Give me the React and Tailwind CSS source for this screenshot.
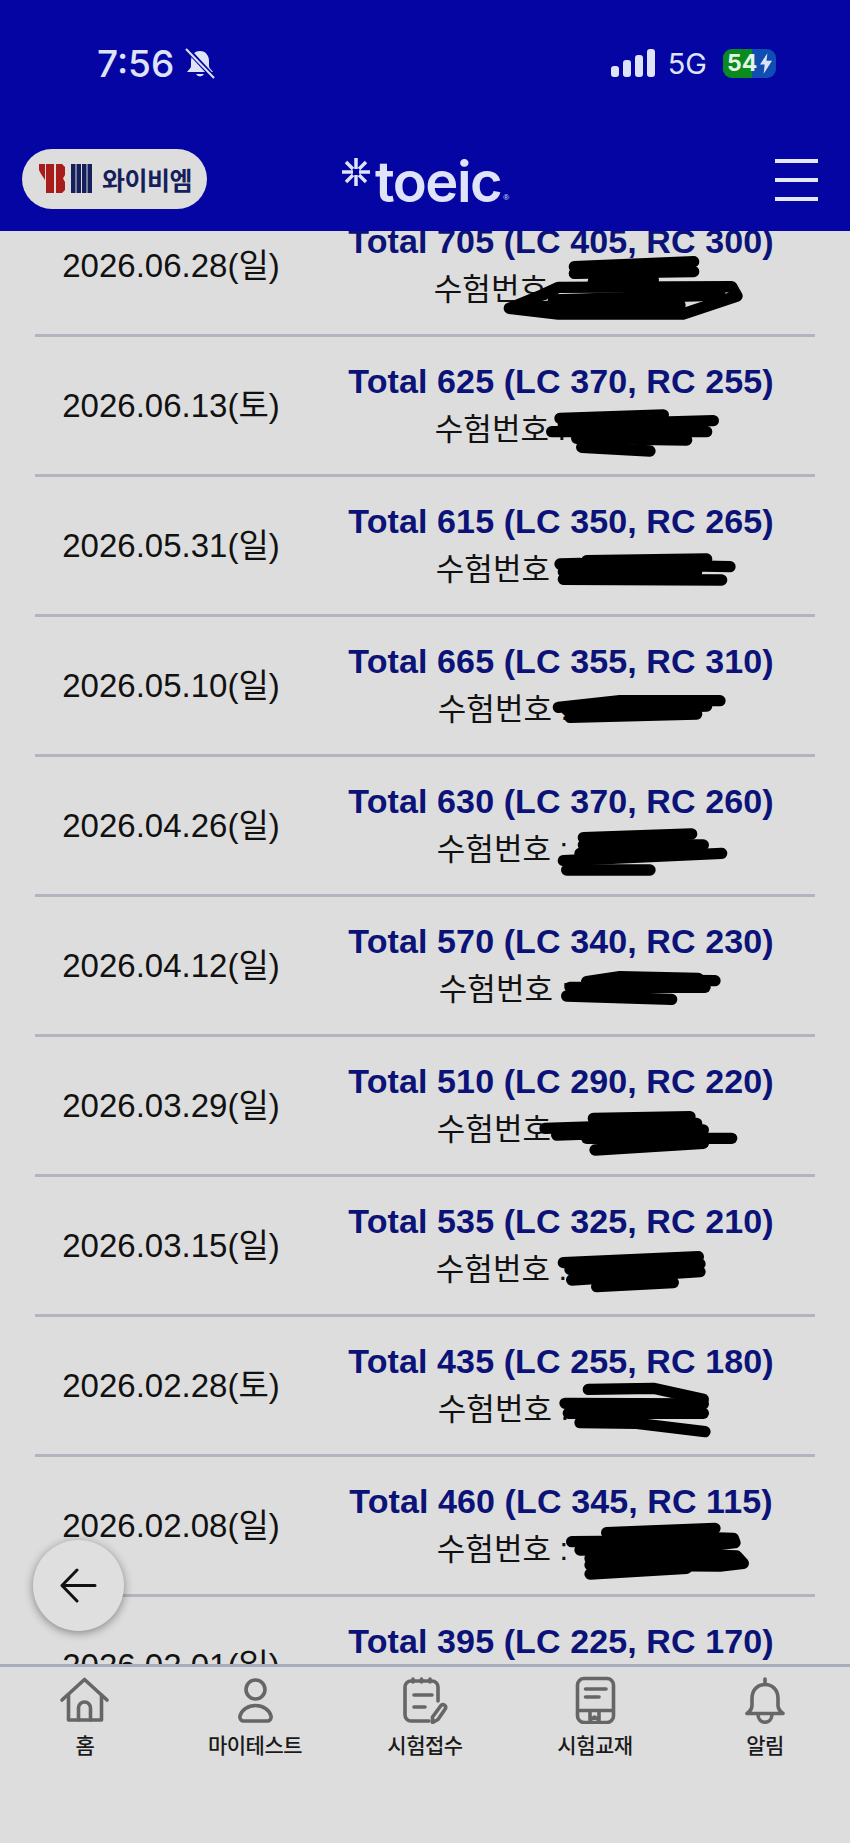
import React from "react";

const rows = [
  { date: "2026.06.28(일)", total: 705, lc: 405, rc: 300, gap: "w-[123px]", marks: ["M463 170 L821 155", "M463 190 L821 185", "M415 232 L935 230 L951 258 L789 312 L415 312 L268 295 L366 255 Z", "M400 270 L900 255", "M330 290 L780 285", "M520 215 L700 210"] },
  { date: "2026.06.13(토)", total: 625, lc: 370, rc: 255, gap: "w-[121px]", marks: ["M420 205 L730 195", "M430 225 L880 212", "M395 245 L860 245", "M470 265 L800 270", "M485 292 L690 303"] },
  { date: "2026.05.31(일)", total: 615, lc: 350, rc: 265, gap: "w-[119px]", marks: ["M420 222 L480 220", "M500 212 L860 207", "M520 222 L930 230", "M430 245 L830 245", "M430 268 L905 270"] },
  { date: "2026.05.10(일)", total: 665, lc: 355, rc: 310, gap: "w-[115px]", marks: ["M415 232 L600 212 L900 212", "M440 240 L860 228", "M450 262 L830 252"] },
  { date: "2026.04.26(일)", total: 630, lc: 370, rc: 260, gap: "w-[117px]", marks: ["M490 203 L815 192", "M490 225 L850 225", "M430 272 L905 250", "M480 250 L800 245", "M440 300 L690 300"] },
  { date: "2026.04.12(일)", total: 570, lc: 340, rc: 230, gap: "w-[113px]", marks: ["M500 215 L600 200 L835 205", "M640 210 L885 212", "M450 232 L855 232", "M440 258 L755 268"] },
  { date: "2026.03.29(일)", total: 510, lc: 290, rc: 220, gap: "w-[117px]", marks: ["M375 235 L830 220", "M520 205 L810 200", "M410 255 L850 240", "M500 265 L935 265", "M525 300 L850 280"] },
  { date: "2026.03.15(일)", total: 535, lc: 325, rc: 210, gap: "w-[119px]", marks: ["M430 218 L835 200", "M450 238 L840 222", "M455 270 L840 245", "M530 290 L760 278"] },
  { date: "2026.02.28(토)", total: 435, lc: 255, rc: 180, gap: "w-[115px]", marks: ["M505 178 L700 175 L850 208", "M435 220 L850 222", "M445 250 L850 250", "M480 278 L650 280 L855 305"] },
  { date: "2026.02.08(일)", total: 460, lc: 345, rc: 115, gap: "w-[117px]", marks: ["M560 188 L885 175", "M600 195 L940 205 L945 218 L800 235", "M455 215 L800 212", "M480 240 L800 235", "M800 252 L950 258 L970 280 L900 288 L510 285", "M510 312 L800 295", "M510 265 L800 260"] },
  { date: "2026.02.01(일)", total: 395, lc: 225, rc: 170, gap: "w-[117px]", marks: [] },
];

const iconProps = { width: 60, height: 48, viewBox: "0 0 60 48", fill: "none", stroke: "#666666", strokeWidth: 3.6, strokeLinecap: "round", strokeLinejoin: "round" };

const HomeIcon = () => (
  <svg {...iconProps}>
    <path d="M7 24 L29.5 3.5 L52 24" />
    <path d="M13.5 19 V44 H46.5 V19" />
    <path d="M23.5 44 V32 a6 6 0 0 1 12 0 V44" />
  </svg>
);

const UserIcon = () => (
  <svg {...iconProps}>
    <circle cx="30.5" cy="13.5" r="9.5" />
    <path d="M19 45 H42 a4 4 0 0 0 4-5 c-1.5-6-8-10.500-15.500-10.500 s-14 4.500-15.500 10.500 a4 4 0 0 0 4 5z" />
  </svg>
);

const NoteIcon = () => (
  <svg {...iconProps}>
    <path d="M34 45 H16 a6 6 0 0 1-6-6 V11 a6 6 0 0 1 6-6 H37 a6 6 0 0 1 6 6 V25" />
    <path d="M18 3 V6 M26.500 3 V6 M35 3 V6" />
    <path d="M19 19 H37 M19 31 H30" />
    <path d="M46 29.500 c2.500-2 5.500 0 4.500 3 L43 43.500 L37.500 46.500 L37.500 41z" />
  </svg>
);

const BookIcon = () => (
  <svg {...iconProps}>
    <rect x="12.500" y="2.500" width="36" height="44" rx="6.500" />
    <path d="M20.500 13 H41 M20.500 21 H34" />
    <path d="M13 34.500 H48" />
    <path d="M25 35 V44 L29.500 41 L34 44 V35" />
  </svg>
);

const BellIcon = () => (
  <svg {...iconProps}>
    <path d="M30 8.500 c-8 0-13 6-13 14 v7 c0 4-2 5.500-5 8 H48 c-3-2.500-5-4-5-8 v-7 c0-8-5-14-13-14z" />
    <path d="M30 3 V8" />
    <path d="M23 38 c0 11 14 11 14 0" />
  </svg>
);

const navItems = [
  { label: "홈", Icon: HomeIcon },
  { label: "마이테스트", Icon: UserIcon },
  { label: "시험접수", Icon: NoteIcon },
  { label: "시험교재", Icon: BookIcon },
  { label: "알림", Icon: BellIcon },
];

const StatusBar = () => (
  <div className="mt-[46px] h-[34px] flex items-center justify-between pl-[97px] pr-[74px] text-[#dfe3f7]">
    <div className="flex items-center gap-[11px]">
      <span className="font-['Inter',sans-serif] font-medium text-[37px] leading-none">7:56</span>
      <svg width="30" height="31" viewBox="0 0 30 31">
        <path d="M15 3 c-6 0-9 5-9 10 v5 c0 2-2 3.500-4 6 h26 c-2-2.500-4-4-4-6 v-5 c0-5-3-10-9-10z" fill="#dfe3f7" />
        <path d="M11 26 a4.500 4.500 0 0 0 8 0z" fill="#dfe3f7" />
        <path d="M1 0 L29 30" stroke="#0505a3" strokeWidth="5" />
        <path d="M1 1 L29 30" stroke="#dfe3f7" strokeWidth="2" />
      </svg>
    </div>
    <div className="flex items-center">
      <div className="flex items-end gap-[4px] h-[28px]">
        <span className="w-[8px] h-[11px] rounded-[3px] bg-[#dfe3f7]" />
        <span className="w-[8px] h-[17px] rounded-[3px] bg-[#dfe3f7]" />
        <span className="w-[8px] h-[22px] rounded-[3px] bg-[#dfe3f7]" />
        <span className="w-[8px] h-[28px] rounded-[3px] bg-[#dfe3f7]" />
      </div>
      <span className="ml-[13px] font-['Inter',sans-serif] text-[29px] leading-none">5G</span>
      <div className="ml-[16px] relative w-[53px] h-[29px] rounded-[9px] bg-[#0f4fb4] overflow-hidden flex items-center">
        <span className="absolute left-0 top-0 bottom-0 w-[29px] bg-[#0a8a1f]" />
        <span className="relative ml-[4px] font-['Inter',sans-serif] font-bold text-[23px] leading-none text-[#e3f5e3]">54</span>
        <svg className="relative ml-[3px]" width="12" height="21" viewBox="0 0 13 22">
          <path d="M8 0 L0 12 H5 L4 22 L13 8 H7z" fill="#dfe3f7" />
        </svg>
      </div>
    </div>
  </div>
);

const Logo = () => (
  <div className="w-[185px] h-[60px] rounded-full bg-[#dddddd] flex items-center pl-[17px] shrink-0">
    <svg width="54" height="30" viewBox="0 0 54 30">
      <g fill="#a81c1c">
        <polygon points="0,0 6,0 6,16 2,10 0,6" />
        <polygon points="7,0 15,0 15,29 7,29" />
        <polygon points="17,0 23,0 26,3 26,11 24,14.500 26,18 26,26 23,29 17,29" />
      </g>
      <g fill="#141f5c">
        <rect x="32" y="0" width="4.500" height="29" />
        <rect x="37.500" y="0" width="4.500" height="29" />
        <rect x="43" y="0" width="4.500" height="29" />
        <rect x="48.500" y="0" width="4.500" height="29" />
      </g>
    </svg>
    <span className="ml-[9px] font-['Noto_Sans_CJK_KR',sans-serif] font-bold text-[25px] leading-none tracking-[-0.5px] text-[#141f5c]">와이비엠</span>
  </div>
);

const ToeicLogo = () => (
  <div className="ml-[134px] mt-[8px] flex items-start text-[#dfe3f7]">
    <svg width="30" height="30" viewBox="0 0 30 30" stroke="#dfe3f7" strokeWidth="3.500">
      <path d="M15 1 V12 M15 18 V29 M1 15 H12 M18 15 H29 M5 5 L12 12 M18 18 L25 25 M25 5 L18 12 M12 18 L5 25" />
    </svg>
    <span className="ml-[4px] mt-[-3px] font-['Inter',sans-serif] font-semibold text-[56px] leading-[56px] tracking-[-1.500px]">toeic</span>
    <span className="ml-[2px] mt-[37px] text-[8px] leading-none">®</span>
  </div>
);

const ScoreRow = ({ row }) => (
  <div className="relative h-[140px] flex items-center border-b-[3px] border-[#b2b5bd]">
    <div className="w-[272px] text-center text-[33px] text-[#111111]">{row.date}</div>
    <div className="flex-1 flex flex-col items-center">
      <div className="font-bold text-[34px] leading-[47px] tracking-[0.1px] text-[#0b1378] whitespace-nowrap">
        Total {row.total} (LC {row.lc}, RC {row.rc})
      </div>
      <div className="flex items-center text-[31px] leading-[47px] text-[#111111] pt-[1px]">
        <span>수험번호 :</span>
        <span className={`inline-block ${row.gap}`} />
      </div>
    </div>
    {row.marks.length > 0 && (
      <svg className="absolute left-[385px] top-[13px] overflow-visible" width="360" height="140" viewBox="0 0 1080 420" fill="none" stroke="#000000" strokeWidth="34" strokeLinecap="round" strokeLinejoin="round">
        {row.marks.map((d) => (
          <path key={d} d={d} />
        ))}
      </svg>
    )}
  </div>
);

const App = () => {
  return (
    <div className="relative w-[850px] h-[1843px] flex flex-col overflow-hidden bg-[#dddddd] font-['Liberation_Sans','Noto_Sans_CJK_KR',sans-serif]">
      <header className="relative z-10 h-[231px] shrink-0 bg-[#0505a3] flex flex-col">
        <StatusBar />
        <div className="mt-[69px] pl-[22px] pr-[32px] flex items-start">
          <Logo />
          <ToeicLogo />
          <div className="ml-auto mt-[10px] w-[43px] flex flex-col gap-[15px]">
            <span className="h-[4px] bg-[#e4e8f7]" />
            <span className="h-[4px] bg-[#e4e8f7]" />
            <span className="h-[4px] bg-[#e4e8f7]" />
          </div>
        </div>
      </header>

      <main className="flex-1 min-h-0 overflow-hidden">
        <div className="-mt-[34px] mx-[35px]">
          {rows.map((row) => (
            <ScoreRow key={row.date} row={row} />
          ))}
        </div>
      </main>

      <nav className="h-[179px] shrink-0 border-t-[3px] border-[#a9acc0] bg-[#dddddd] grid grid-cols-5 content-start pt-[9px]">
        {navItems.map(({ label, Icon }) => (
          <div key={label} className="flex flex-col items-center">
            <Icon />
            <span className="mt-[7px] font-['Noto_Sans_CJK_KR',sans-serif] font-medium text-[21px] leading-[26px] tracking-[-0.5px] text-[#1a1a1a]">{label}</span>
          </div>
        ))}
      </nav>

      <button className="absolute left-[33px] top-[1540px] w-[91px] h-[91px] rounded-full bg-[#dfdfdf] shadow-[0_2px_10px_rgba(0,0,0,0.4)] flex items-center justify-center">
        <svg width="37" height="35" viewBox="0 0 37 35" fill="none" stroke="#111111" strokeWidth="3" strokeLinecap="round" strokeLinejoin="round">
          <path d="M35 17.500 H2 M17 2 L2 17.500 L17 33" />
        </svg>
      </button>
    </div>
  );
};

export default App;
